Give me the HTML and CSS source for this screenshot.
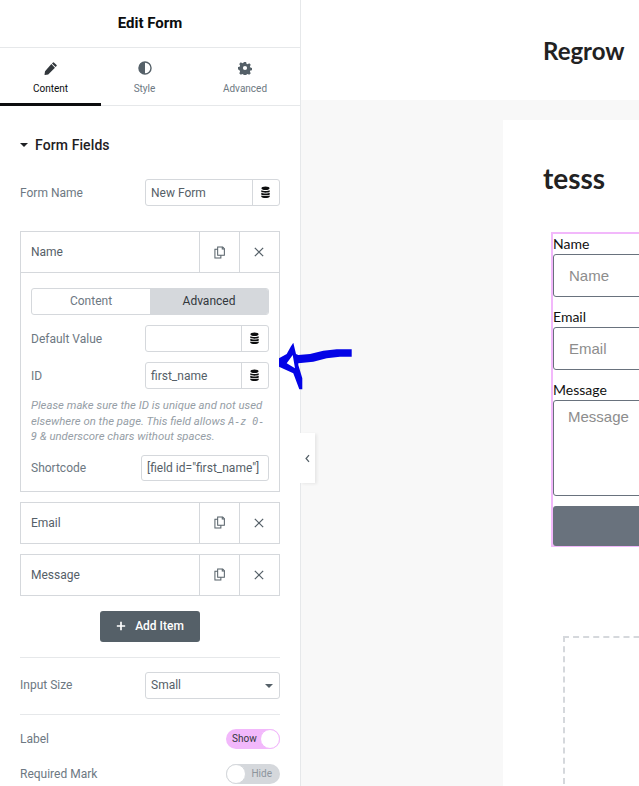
FILE: index.html
```html
<!DOCTYPE html>
<html lang="en">
<head>
<meta charset="utf-8">
<title>Edit Form</title>
<link rel="stylesheet" href="styles.css">
</head>
<body>
<div class="app">
  <aside class="panel">
    <header class="panel-head">Edit Form</header>
    <nav class="tabs">
      <div class="tab tab-active">
        <svg class="tab-icon" viewBox="0 0 16 16"><path d="M11.3 1.6l3.1 3.1a.7.7 0 0 1 0 1L13.2 6.9 9.1 2.8l1.2-1.2a.7.7 0 0 1 1 0zM8.4 3.5l4.1 4.1-7.7 7.7-3.7.6a.4.4 0 0 1-.5-.5l.6-3.7z" fill="#32373c"/></svg>
        <span>Content</span>
      </div>
      <div class="tab">
        <svg class="tab-icon" viewBox="0 0 16 16"><circle cx="8" cy="8" r="6.9" fill="none" stroke="#556068" stroke-width="1.6"/><path d="M8 1.100a6.900 6.900 0 0 0 0 13.800z" fill="#556068"/></svg>
        <span>Style</span>
      </div>
      <div class="tab">
        <svg class="tab-icon" viewBox="0 0 16 16"><path fill="#556068" fill-rule="evenodd" d="M6.7 1h2.6l.4 2 1.3.6 1.8-1.1 1.8 1.9-1 1.7.5 1.4 1.9.4v2.6l-1.9.4-.5 1.3 1 1.8-1.8 1.8-1.8-1-1.3.5-.4 1.9H6.7l-.4-1.9-1.3-.5-1.8 1-1.8-1.8 1-1.8-.5-1.3L0 9.500V6.900l1.900-.4.500-1.400-1-1.700 1.800-1.900 1.800 1.100 1.300-.6zM8 5.600a2.400 2.400 0 1 0 0 4.800 2.400 2.400 0 0 0 0-4.800z"/></svg>
        <span>Advanced</span>
      </div>
    </nav>
    <div class="panel-body">
      <h2 class="section"><span class="caret"></span>Form Fields</h2>
      <div class="control form-name">
        <label class="ctl-label">Form Name</label>
        <div class="input-group">
          <span class="input-box">New Form</span>
          <span class="db"><svg viewBox="0 0 12 14"><use href="#db"/></svg></span>
        </div>
      </div>

      <div class="repeater rep-open">
        <div class="rep-head">
          <span class="rep-title">Name</span>
          <span class="rep-tool"><svg class="ic-copy" viewBox="0 0 12 14"><use href="#copy"/></svg></span>
          <span class="rep-tool"><svg class="ic-x" viewBox="0 0 12 12"><use href="#x"/></svg></span>
        </div>
        <div class="rep-body">
          <div class="switcher">
            <span class="sw-item">Content</span>
            <span class="sw-item sw-on">Advanced</span>
          </div>
          <div class="control narrow first-row">
            <label class="ctl-label">Default Value</label>
            <div class="input-group">
              <span class="input-box"></span>
              <span class="db"><svg viewBox="0 0 12 14"><use href="#db"/></svg></span>
            </div>
          </div>
          <div class="control narrow id-row">
            <label class="ctl-label">ID</label>
            <div class="input-group">
              <span class="input-box">first_name</span>
              <span class="db"><svg viewBox="0 0 12 14"><use href="#db"/></svg></span>
            </div>
          </div>
          <p class="help">Please make sure the ID is unique and not used elsewhere on the page. This field allows <code>A-z 0-<wbr>9</code> &amp; underscore chars without spaces.</p>
          <div class="control narrow shortcode">
            <label class="ctl-label">Shortcode</label>
            <span class="code-box">[field id="first_name"]</span>
          </div>
        </div>
      </div>

      <div class="repeater">
        <div class="rep-head">
          <span class="rep-title">Email</span>
          <span class="rep-tool"><svg class="ic-copy" viewBox="0 0 12 14"><use href="#copy"/></svg></span>
          <span class="rep-tool"><svg class="ic-x" viewBox="0 0 12 12"><use href="#x"/></svg></span>
        </div>
      </div>
      <div class="repeater">
        <div class="rep-head">
          <span class="rep-title">Message</span>
          <span class="rep-tool"><svg class="ic-copy" viewBox="0 0 12 14"><use href="#copy"/></svg></span>
          <span class="rep-tool"><svg class="ic-x" viewBox="0 0 12 12"><use href="#x"/></svg></span>
        </div>
      </div>

      <div class="add-wrap">
        <div class="add-btn">
          <svg class="ic-plus" viewBox="0 0 12 12"><path d="M6 1v10M1 6h10" stroke="#fff" stroke-width="2" fill="none"/></svg>
          <span>Add Item</span>
        </div>
      </div>

      <div class="sep-row size-row">
        <label class="ctl-label">Input Size</label>
        <div class="select-box"><span>Small</span><span class="sel-caret"></span></div>
      </div>

      <div class="sep-row label-row">
        <label class="ctl-label">Label</label>
        <div class="toggle toggle-on"><span class="toggle-text">Show</span><span class="knob"></span></div>
      </div>
      <div class="plain-row">
        <label class="ctl-label">Required Mark</label>
        <div class="toggle"><span class="knob"></span><span class="toggle-text">Hide</span></div>
      </div>
    </div>
  </aside>

  <main class="canvas">
    <div class="site-head"><span class="site-title">Regrow</span></div>
    <div class="stage">
      <section class="card">
        <h1 class="card-title">tesss</h1>
        <form class="form">
          <div class="lbl">Name</div>
          <div class="fake-input">Name</div>
          <div class="lbl lbl-next">Email</div>
          <div class="fake-input">Email</div>
          <div class="lbl lbl-next">Message</div>
          <div class="fake-area">Message</div>
          <div class="fake-submit"></div>
        </form>
        <div class="dropzone"></div>
      </section>
    </div>
  </main>

  <div class="collapse">
    <svg viewBox="0 0 6 10"><path d="M4.800 1L1.300 5l3.500 4" fill="none" stroke="#556068" stroke-width="1.500"/></svg>
  </div>

  <svg class="arrow" viewBox="0 0 90 70">
    <path fill="#0303e6" fill-rule="evenodd" d="M81.700 19.300L66.700 19.300 53.300 20.700 40 24 28.300 25 26 24 23.300 12.700 20.700 16.700 16.700 24 9 28.300 9 36.700 23.300 43.300 29.300 59.300 32.300 59.300 32.300 48.300 28.300 35 28.300 33.300 43.300 31.700 56.700 28.300 70 26.700 81.700 26.700ZM22.700 25L16.700 33.300 25 38.300Z"/>
  </svg>
</div>

<svg class="defs" width="0" height="0">
  <defs>
    <g id="db" fill="#0c0d0e">
      <ellipse cx="6" cy="2.300" rx="4.400" ry="1.900"/>
      <path d="M1.400 4.600c1 1 8.200 1 9.200 0v1.700c-1 1.300-8.200 1.300-9.200 0zM1.400 7.400c1 1 8.200 1 9.200 0v1.700c-1 1.300-8.200 1.300-9.200 0zM1.400 10.200c1 1 8.200 1 9.200 0v1.500c-1 1.800-8.200 1.800-9.200 0z"/>
    </g>
    <g id="copy" fill="none" stroke="#556068" stroke-width="1.100">
      <path d="M4 1h5.500l1.800 1.800V10H4z"/>
      <path d="M4 3.500H1v9.500h6.500V10"/>
      <path d="M9 1v2.300h2.300"/>
    </g>
    <path id="x" d="M1 1l10 10M11 1L1 11" stroke="#556068" stroke-width="1.500" fill="none"/>
  </defs>
</svg>
</body>
</html>
```
FILE: styles.css
```css
* { box-sizing: border-box; }
html, body { margin: 0; padding: 0; height: 786px; overflow: hidden; background: #fff; }
body { font-family: Roboto, "Liberation Sans", sans-serif; color: #556068; }

.app { position: relative; display: flex; width: 639px; height: 786px; overflow: hidden; }
.defs { position: absolute; }

/* panel */
.panel { flex: 0 0 301px; width: 301px; height: 786px; overflow: hidden; background: #fff; border-right: 1px solid #e6e8ea; }
.panel-head { height: 48px; display: flex; align-items: center; justify-content: center; padding-bottom: 2px; font-size: 15px; font-weight: 700; color: #0c0d0e; border-bottom: 1px solid #e6e8ea; }

.tabs { display: grid; grid-template-columns: 101px 87px 114px; height: 58px; border-bottom: 1px solid #e6e8ea; }
.tab { display: flex; flex-direction: column; align-items: center; padding-top: 13px; font-size: 10px; color: #6d7882; height: 58px; }
.tab span { margin-top: 8px; line-height: 12px; }
.tab-active { color: #0c0d0e; border-bottom: 3px solid #0c0d0e; }
.tab-icon { width: 14px; height: 14px; display: block; }

.panel-body { padding: 0 20px; }
.section { display: flex; align-items: center; margin: 31px 0 0; height: 16px; font-size: 14px; font-weight: 500; color: #1f2124; letter-spacing: .1px; }
.caret { width: 0; height: 0; margin-right: 7px; border-left: 4px solid transparent; border-right: 4px solid transparent; border-top: 4px solid #1f2124; }

.control { display: flex; align-items: center; justify-content: space-between; }
.ctl-label { font-size: 12px; color: #6d7882; line-height: 14px; }
.form-name { margin-top: 26px; }

.input-group { display: flex; height: 27px; width: 135px; border: 1px solid #d5d8dc; border-radius: 3px; }
.input-box { flex: 1; padding-left: 5px; font-size: 12px; line-height: 26px; color: #556068; }
.db { width: 27px; flex: 0 0 27px; padding-right: 1px; border-left: 1px solid #d5d8dc; display: flex; align-items: center; justify-content: center; }
.db svg { width: 11px; height: 13px; }

.repeater { border: 1px solid #d5d8dc; margin-top: 10px; }
.rep-open { margin-top: 25px; }
.rep-head { display: flex; height: 40px; }
.rep-title { flex: 1; padding-left: 10px; font-size: 12px; line-height: 40px; color: #556068; }
.rep-tool { width: 40px; border-left: 1px solid #d5d8dc; display: flex; align-items: center; justify-content: center; }
.ic-copy { width: 11px; height: 13px; }
.ic-x { width: 10px; height: 10px; margin-right: 1px; }

.rep-body { border-top: 1px solid #d5d8dc; padding: 15px 10px 10px; }
.switcher { display: flex; height: 27px; border: 1px solid #d5d8dc; border-radius: 3px; overflow: hidden; }
.sw-item { flex: 1; text-align: center; font-size: 12px; line-height: 25px; color: #6d7882; }
.sw-on { background: #d5d8dc; color: #32373c; }
.narrow .input-group { width: 124px; }
.first-row { margin-top: 10px; }
.id-row { margin-top: 10px; }
.help { margin: 9px 0 0; font-size: 11.350px; line-height: 15.500px; font-style: italic; color: #969ea6; }
.help code { font-family: "DejaVu Sans Mono", "Liberation Mono", monospace; font-size: 10px; font-style: italic; }
.shortcode { margin-top: 10px; }
.code-box { width: 128px; height: 26px; border: 1px solid #d5d8dc; border-radius: 3px; padding-left: 5px; font-size: 12px; line-height: 24px; white-space: nowrap; overflow: hidden; color: #556068; }

.add-wrap { display: flex; justify-content: center; margin-top: 15px; }
.add-btn { width: 100px; height: 31px; border-radius: 3px; background: #556068; color: #fff; font-size: 12px; font-weight: 500; display: flex; align-items: center; justify-content: center; gap: 9px; padding-bottom: 1px; }
.ic-plus { width: 10px; height: 10px; }

.sep-row { display: flex; align-items: center; justify-content: space-between; border-top: 1px solid #e6e8ea; }
.size-row { margin-top: 15px; height: 57px; }
.size-row .ctl-label { margin-bottom: 2px; }
.select-box { width: 135px; height: 27px; border: 1px solid #d5d8dc; border-radius: 3px; display: flex; align-items: center; justify-content: space-between; padding: 0 5px 2px; font-size: 12px; color: #556068; }
.sel-caret { width: 0; height: 0; margin: 2px 1px 0 0; border-left: 4px solid transparent; border-right: 4px solid transparent; border-top: 4px solid #556068; }
.label-row { height: 49px; padding-top: 1px; }
.plain-row { display: flex; align-items: center; justify-content: space-between; height: 22px; }

.toggle { width: 54px; height: 20px; border-radius: 10px; background: #d5d8dc; display: flex; align-items: center; justify-content: space-between; font-size: 10px; color: #8d959c; }
.toggle-on { background: #f2b8fb; color: #32373c; }
.toggle-text { flex: none; padding: 0 8px 0 0; }
.toggle-on .toggle-text { padding: 0 0 1px 6px; }
.knob { flex: none; width: 20px; height: 20px; border-radius: 50%; background: #fff; border: 1px solid #d5d8dc; }
.toggle-on .knob { border-color: #f2b8fb; }

/* canvas */
.canvas { flex: 1; min-width: 0; height: 786px; overflow: hidden; display: flex; flex-direction: column; }
.site-head { flex: 0 0 100px; background: #fff; padding: 35px 0 0 242px; }
.site-title { font-family: Lato, sans-serif; font-size: 24px; line-height: 32px; font-weight: 700; color: #222; white-space: nowrap; }
.stage { flex: 1; background: #f8f8f8; padding: 20px 0 0 202px; }
.card { width: 700px; height: 700px; background: #fff; padding: 41px 0 0 40px; position: relative; }
.card-title { margin: 0; font-family: Lato, sans-serif; font-size: 28px; font-weight: 700; line-height: 34px; color: #222; }
.form { width: 500px; margin: 37px 0 0 8px; height: 315px; border: 2px solid #f2b8fb; padding: 1px 0 0 0; font-family: Lato, sans-serif; font-size: 14px; color: #111; }
.lbl { line-height: 17px; height: 17px; }
.lbl-next { margin-top: 11px; }
.fake-input { height: 43px; margin-top: 2px; border: 1px solid #69727d; border-radius: 3px; padding-left: 15px; font-family: "Liberation Sans", Arial, sans-serif; font-size: 15px; line-height: 41px; color: #8d8d8d; }
.fake-area { height: 96px; margin-top: 2px; border: 1px solid #69727d; border-radius: 3px; padding: 5px 0 0 14px; font-family: "Liberation Sans", Arial, sans-serif; font-size: 15px; line-height: 21px; color: #8d8d8d; }
.fake-submit { height: 40px; margin-top: 10px; background: #69727d; border-radius: 3px; }
.dropzone { width: 500px; height: 300px; margin: 89px 0 0 20px; border: 2px dashed #d5d8dc; }

/* overlays */
.collapse { position: absolute; left: 300px; top: 433px; width: 15px; height: 50px; background: #fff; box-shadow: 2px 1px 3px rgba(0,0,0,.07); display: flex; align-items: center; justify-content: center; }
.collapse svg { width: 5px; height: 9px; }
.arrow { position: absolute; left: 270px; top: 330px; width: 90px; height: 70px; }
```
